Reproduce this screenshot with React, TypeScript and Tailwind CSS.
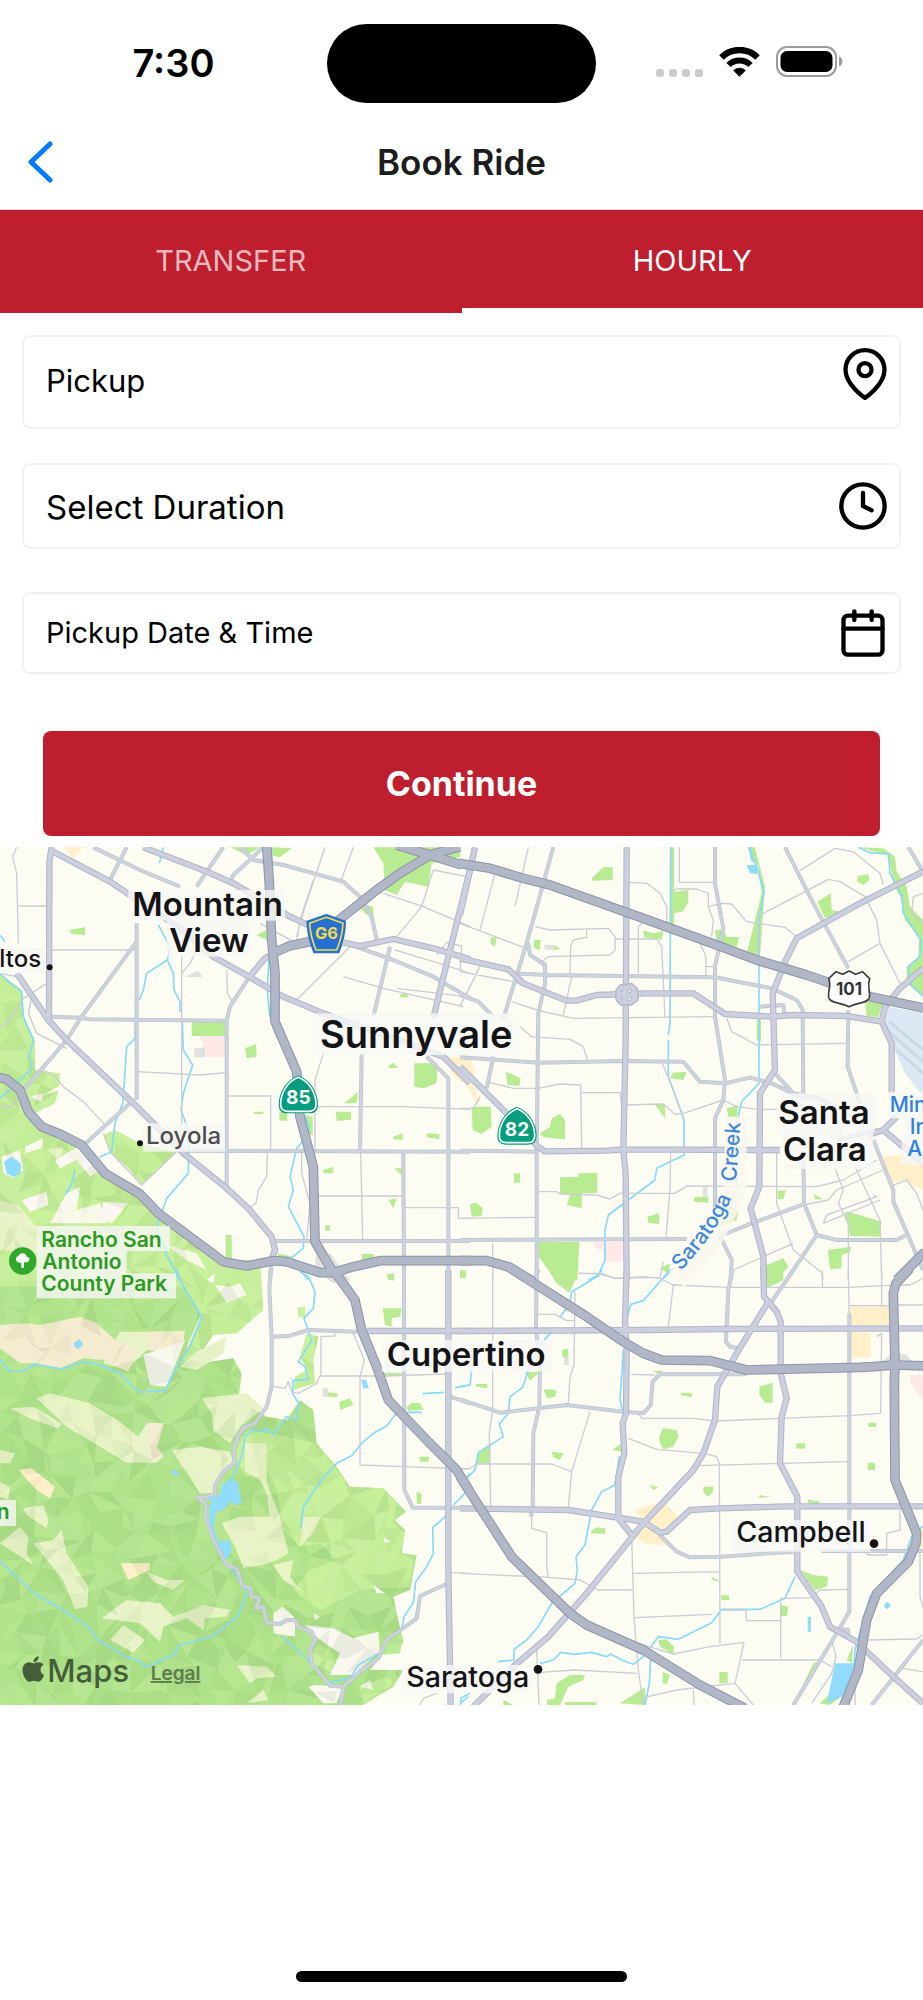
import { useState } from 'react';
import { FiCalendar, FiClock, FiMapPin } from 'react-icons/fi';
import { FaApple } from 'react-icons/fa';

type Tile = {
  x: number;
  y: number;
  hills?: string;
  meadow?: string;
  tan?: string;
  sand?: string;
  clearing?: string;
  parks: string;
  commerce?: string;
  hospital?: string;
  airport?: string;
  lakes?: string;
  creeks: string;
  minor: string;
  secondary: string;
  major: string;
  freeway: string;
};

// Each tile holds its own local coordinates, three map units per pixel.
const tiles: Tile[] = [
  {
    x: 0,
    y: 0,
    meadow:
      'M0 400 65 450 70 530 105 600 105 690 180 700 178 738 130 765 175 752 165 790 100 822 130 870 245 925 310 1010 420 1070 500 1140 590 1210 660 1270 740 1290 760 1340 0 1340ZM310 885 345 870 430 915 530 935 425 1035 385 985 330 940Z',
    hills:
      'M0 590 50 575 100 620 90 690 50 720 0 700ZM0 890 60 900 70 950 0 960ZM70 900 160 860 230 920 150 990 90 1060 0 1080 0 1030ZM0 1240 110 1230 300 1240 480 1240 540 1340 0 1340ZM790 0Z',
    tan: 'M0 1080 60 1100 110 1160 130 1240 0 1230ZM140 930 190 920 180 960Z',
    clearing:
      'M75 920 130 895 125 925 75 940ZM5 950 60 930 70 990 40 1015 10 1000ZM165 960 245 915 300 990 270 1010 230 960 180 985ZM65 1080 140 1055 145 1095 90 1115ZM150 1150 200 1060 240 1040 230 1110 300 1090 320 1150 190 1150ZM310 1085 385 1090 335 1150 300 1140ZM90 770 130 760 125 785ZM500 1215 590 1240 620 1290 560 1260Z',
    parks:
      'M575 545 675 545 675 588 575 588ZM735 625 768 612 770 650 740 655ZM208 270 255 262 255 285 215 282ZM690 22 780 22 740 45ZM815 22 875 25 840 52 815 45ZM1120 22 1380 22 1380 50 1295 70 1285 140 1215 125 1190 165 1155 150 1150 70ZM1080 190 1120 200 1120 240 1085 210ZM770 285 800 270 800 300ZM1200 465 1215 457 1228 472 1200 472ZM1165 678 1180 668 1195 684 1165 684ZM1243 670 1312 670 1310 730 1270 745 1243 740ZM1033 790 1075 755 1070 790ZM1007 815 1053 815 1053 840 1010 842ZM838 815 862 815 862 842 838 842ZM912 825 938 830 938 885 922 885ZM800 440 820 550 890 690 860 640 810 540ZM762 815 790 815 790 822 762 822ZM1180 890 1208 880 1208 900 1180 898ZM1280 880 1318 882 1318 898 1280 892ZM970 990 1000 980 1000 1000 970 1000ZM1183 985 1205 985 1205 1005ZM1165 1080 1190 1075 1180 1105ZM975 1158 990 1155 990 1172 975 1172ZM677 1185 695 1185 695 1260 677 1250ZM1085 1242 1122 1242 1122 1262 1085 1262ZM830 1240 880 1250 840 1255ZM1160 1302 1182 1302 1182 1320ZM1382 1292 1398 1292 1398 1315 1382 1312Z',
    commerce: 'M190 22 250 22 220 55ZM1335 650 1410 650 1410 740 1360 710ZM1070 765 1078 765 1078 785Z',
    hospital: 'M600 588 675 588 675 652 620 650Z',
    lakes: 'M12 965 35 950 62 970 62 1000 40 1012 20 1000Z',
    creeks:
      'M0 400 25 425 65 455 70 530 100 600 88 650 95 685 50 730 0 775M0 285 15 305M490 22 478 70M475 255 510 320 502 360 440 400 430 450 418 480M502 360 520 400 522 450 540 485 540 515M407 495 405 595 380 620 372 740 368 790 345 850 335 935 298 952M547 545 550 630 578 675 550 760 543 810 565 870 565 1000 500 1075 470 1160 500 1245 540 1320M808 340 802 450 808 520 830 590 900 690M912 825 928 860 925 885 890 925 870 1010 880 1050 865 1100 912 1190 910 1225 872 1255 925 1320M225 990 215 1030 198 1062M812 22 818 90',
    minor:
      'M50 22 38 50 50 100 55 310M52 198 145 198M155 330 410 330M545 350 545 850M410 695 600 705 680 698M680 768 812 768 812 935M945 800 1210 800 1410 808M970 640 945 720 945 930M975 22 915 200 890 290M1060 22 1020 130M1050 320 890 480M1150 160 1270 200 1410 260M1300 90 1400 110M1300 90 1265 200 1190 290M1030 410 1150 445 1390 500M1190 445 1400 470M945 1068 1205 1068M1082 935 1088 1200M1210 1103 1375 1103 1375 1135 1410 1135M802 940 800 1010 775 1050 768 1090 745 1105M905 940 905 1000 930 1090 920 1200M95 470 85 520 110 580 200 625M130 690 160 705 190 740 250 785 320 860M0 558 20 550 70 475 140 430M0 400 50 410M545 400 570 370 590 330M680 390 682 460 700 490M310 880 330 935 425 1035 530 935M1185 330 1250 350 1320 370 1410 400M1310 345 1340 308 1385 318 1380 390M780 250 890 310 900 240 940 120M0 800 30 800 75 755',
    secondary:
      'M410 250 410 780M155 530 240 533 270 538 680 542M255 912 390 790M280 22 420 90 540 140M380 22 330 120M670 22 630 80 590 140M690 130 700 105 790 22M720 22 760 60 850 75 1030 125 1080 170 1115 230 1130 300M1040 310 1180 360 1300 410 1410 475M1170 320 1120 530M1085 640 1080 930M565 932 1410 935M1280 650 1345 715 1345 1320M1210 935 1212 1320M825 1203 1410 1203M815 1265 810 1320M75 745 200 600 245 530 410 305M745 415 690 500 680 540 680 1045',
    major:
      'M150 30 330 125 540 265 640 350 750 412 850 470 970 520 1250 620 1330 650 1410 730M50 400 145 540 200 600 400 790 550 940 680 1045 745 1105 815 1190 825 1230 812 1265M430 22 620 95 700 130 870 230 940 262M1030 308 1080 318 1180 297 1300 325 1410 358M147 545 148 65 155 22M1410 90 1340 370 1300 535M745 415 795 355 830 338',
    freeway:
      'M-15 710 20 718 60 750 85 815 125 860 180 882 245 915 315 1000 420 1062 475 1120 670 1265 740 1278 820 1262 860 1265 960 1298 1000 1298 1060 1280 1140 1262 1415 1262M800 15 808 130 815 300 825 400 825 545 890 695 900 830 940 980 945 1205 1000 1298M830 335 870 317 940 303M1010 245 1130 150 1200 100 1290 45 1380 20M1190 15 1290 45 1385 75',
  },
  {
    x: 1380,
    y: 0,
    parks:
      'M395 115 430 82 458 82 458 120 398 122ZM630 22 642 22 642 260 630 260ZM640 155 685 150 685 185 668 215 640 220ZM864 22 885 22 915 140 900 350 860 340 880 260 905 160 895 80ZM765 270 790 268 800 290 838 292 830 320 770 305ZM550 272 585 280 610 272 605 300 552 292ZM1195 22 1270 25 1305 50 1310 95 1340 140 1350 200 1389 240 1389 470 1340 430 1340 380 1375 350 1378 290 1335 240 1325 180 1300 130 1285 45ZM1072 185 1112 160 1115 210 1140 215 1095 235ZM1192 108 1225 102 1228 120 1210 135 1192 125ZM92 292 110 292 105 320 92 312ZM222 300 242 300 240 330 222 325ZM282 315 300 325 285 332ZM138 695 182 715 178 738 142 735ZM35 800 92 800 95 860 65 882 38 870ZM240 880 270 860 275 835 300 822 315 840 315 898 250 892ZM630 715 640 698 680 695 670 720ZM586 795 615 795 615 835ZM800 805 835 795 830 838 805 830ZM162 1000 180 1000 180 1028 162 1028ZM300 1012 355 1010 355 1000 412 998 412 1058 365 1060 365 1105 320 1095 330 1065 300 1060ZM30 1092 50 1088 68 1105 65 1128 35 1130ZM562 1130 597 1120 597 1152 565 1148ZM702 1072 745 1070 745 1088 702 1085ZM953 1052 978 1050 970 1078 953 1078ZM1060 1062 1090 1078 1065 1078ZM235 1206 358 1206 352 1320 290 1320 235 1250ZM1155 1115 1180 1120 1265 1145 1260 1190 1170 1188ZM1104 1230 1172 1220 1172 1235 1145 1245 1145 1285 1110 1288ZM920 1275 970 1255 985 1280 950 1320 920 1320ZM1215 482 1268 492 1255 532 1220 528ZM775 1090 835 1110 830 1140 780 1160ZM600 1285 630 1270 625 1300ZM0 1292 18 1310 0 1315ZM890 540 903 540 903 605 890 600Z',
    commerce: 'M0 648 35 660 45 700 35 730 60 780 55 800 0 700ZM970 975 1025 975 1025 985 975 985ZM1260 950 1330 945 1389 960 1389 1050 1330 1020 1290 1030Z',
    hospital: 'M402 1206 490 1206 490 1265 440 1265 430 1230 405 1225Z',
    airport: 'M1285 500 1389 520 1389 770 1335 700 1300 620 1270 560Z',
    lakes: 'M860 75 890 75 892 102 870 100ZM866 22 874 22 880 70 872 60Z',
    creeks:
      'M632 22 630 550 625 585M625 600 625 710 672 840 672 945 590 985 585 1020 445 1125 435 1170 435 1260 415 1305 385 1320M866 22 890 80 912 155 897 240 897 730 845 785 830 850 830 1040 805 1120M1195 22 1230 38 1285 42 1290 100 1325 165 1330 220 1382 300 1380 350 1345 380 1350 430 1389 470M605 1320 640 1285',
    minor:
      'M205 22 165 200M280 22 240 150M225 260 270 270 445 265 465 290 465 330 450 345 265 350 240 370M380 270 380 292 340 300 332 320 330 405M465 297 590 297 605 320 615 530M535 400 535 260 550 245M505 127 560 130 600 160 620 200 620 260M658 22 658 127 765 127M637 155 650 147 710 147 745 160 745 200 785 190 815 192 860 245 975 262 1010 290M745 200 760 240 755 290M690 290 720 310 738 350 738 405M738 380 765 380M1020 92 1125 25 1180 35 1260 100 1270 135M890 230 1105 118 1140 125 1215 170 1250 240 1260 310 1165 365M1260 310 1320 430M1389 160 1360 170 1355 220 1389 250M0 250 190 322M105 100 60 270M0 395 160 425 250 460M155 485 230 510 340 535 760 530M310 525 335 410M0 500 60 380M180 560 215 590 330 598 370 620 382 660M90 728 160 745 235 745 300 732 362 735 365 925M365 758 480 758 485 795 610 792 645 822 670 820 790 780 830 800 890 808 1030 808M0 805 40 805 60 770M800 535 815 575 890 615 1160 610M605 665 640 750 670 830M235 1055 290 1055 300 1062 410 1065 450 1077 480 1060 645 1060 680 1038 1070 1040 1150 1020 1250 960M632 940 630 1050 618 1190M0 1135 235 1132M98 1210 98 1320M950 935 950 1090 1000 1230 1088 1300 1088 1320M1030 1095 1105 1080 1130 1050 1270 990M1125 985 1150 1050 1135 1090 1165 1150 1165 1320M1185 980 1260 1140 1265 1320M1090 1150 1100 1125 1250 1070 1240 1065M1090 1150 1260 1080M820 1290 1000 1210M1130 840 1150 900M1389 1110 1370 1060 1340 1020 1290 1040M355 1300 430 1302 465 1315 600 1312 610 1265M895 240 895 350',
    secondary:
      'M765 22 765 130 790 265 765 380 765 530 795 720 790 780 765 835 765 1100M280 22 200 310 130 535M205 310 210 345 255 375 255 430 235 520 230 935 230 1320M150 400 260 405 765 412 935 445 1010 480 1028 510 1030 780M975 22 1060 190 1165 385M1165 510 1163 680 1200 790M0 652 235 668 490 663 670 665 720 725 795 730 870 713 935 730 1020 770M0 932 235 935M0 465 55 485 100 530M100 650 80 745M0 1200 490 1198 680 1197M1030 960 1032 1090 1070 1185 1130 1200 1310 1200 1340 1185M780 1188 875 1150 1030 1093M780 1188 815 1260 812 1320M1070 1185 980 1320M1240 900 1300 1050 1300 1085 1389 1290M900 500 970 495 975 530M945 700 1000 760 1075 775 1130 800M1130 900 1250 870M1345 22 1389 95',
    major:
      'M0 680 150 830 235 922 255 934 440 932 490 928 890 930 960 930M45 22 0 225M0 355 145 388 190 430 320 482 350 482 410 465 560 460 700 460 795 522 935 530 1000 525 1160 528 1265 545 1275 500 1320 445 1389 385M500 22 497 600 490 930 497 1000 500 1320M1389 95 1200 190 1010 295 975 365 938 460 945 690 900 760 898 1040 872 1105 910 1250 912 1320M1265 545 1295 610 1295 760M1225 885 1270 870 1310 830M1270 870 1389 970',
    freeway:
      'M-5 70 90 85 190 115 270 135 480 210 550 235 770 315 890 360 1040 405 1230 470 1395 505M0 1262 80 1262 150 1282 220 1325M1395 1235 1310 1320',
  },
  {
    x: 0,
    y: 1290,
    hills:
      'M0 -30 540 -30 605 130 560 230 600 280 700 265 725 310 715 390 800 440 860 450 900 390 940 420 950 520 1010 590 1050 652 1150 655 1218 725 1185 750 1215 780 1205 850 1250 855 1230 960 1180 980 1197 1060 1210 1120 1150 1150 1110 1200 1210 1200 1180 1250 1080 1310 0 1310Z',
    meadow:
      'M535 -30 780 -30 790 120 710 190 640 195 590 270 545 270 605 140 560 60ZM740 480 860 500 950 520 1050 650 1150 655 1190 700 1180 760 1215 790 1200 850 1240 870 1230 950 1080 960 960 1020 880 960 930 900 1010 870 960 820 900 830 850 780 830 660 800 600 740 620 700 560ZM950 1120 1000 1150 1000 1210 930 1180ZM1080 1250 1160 1220 1180 1240 1090 1300ZM400 290 500 330 470 350ZM920 190 955 200 940 270 945 340 880 360 885 320 920 300 900 260ZM893 112 915 112 915 145 895 140Z',
    tan: 'M110 385 150 370 270 400 360 455 415 500 440 460 490 460 470 530 490 560 465 578 380 578 300 530 200 470ZM30 415 100 410 185 460 175 475 100 450ZM605 385 740 370 790 415 720 470 690 520 640 480 635 430ZM515 540 600 530 690 545 700 580 650 630 640 670 600 670ZM735 520 800 520 800 640 840 740 865 850 830 870 790 885 730 893 705 830 665 760 720 740 810 740 800 670 780 630 735 605ZM360 185 550 185 550 215 440 240 380 300 310 280ZM540 290 590 245 680 200 670 250 590 300ZM100 820 160 810 185 780 200 850 265 950 262 1010 225 1018 190 930ZM305 1045 380 990 480 1000 520 1040 610 1005 690 1020 680 1040 615 1045 610 1080 560 1045 490 1070 480 1115 420 1060ZM330 1110 370 1065 435 1110 400 1148ZM710 1185 800 1190 830 1220 770 1225 750 1240ZM820 885 880 870 870 920 905 965 850 930ZM910 740 960 740 940 790 900 830ZM440 905 500 930 555 930 520 960 460 935ZM0 635 30 650 25 690 0 680ZM70 715 130 705 145 750 140 775 80 735ZM0 820 60 770 85 800 80 850 100 885 30 840ZM0 540 45 550 30 580 0 580ZM740 1300 790 1260 805 1290Z',
    sand: 'M0 165 80 160 120 165 240 140 290 160 345 210 410 240 385 305 310 270 250 265 180 295 100 280 60 280 0 235ZM445 460 492 460 470 530 490 555 470 578 445 570ZM445 185 555 182 550 215 490 250 445 240Z',
    clearing:
      'M430 255 555 212 500 350 450 345 440 300ZM820 1030 848 1010 885 1045 885 1100 820 1090ZM915 1065 1000 1075 1060 1105 1135 1085 1140 1145 1060 1215 990 1215 1020 1150 960 1110ZM645 45 690 50 720 40 740 75 680 98ZM620 30 645 10 640 40ZM945 1245 1030 1250 1010 1300 970 1300 925 1250ZM1120 945 1155 970 1130 970ZM1150 800 1172 815 1155 820ZM940 1030 960 1040 945 1050ZM1080 1250 1110 1230 1120 1260Z',
    parks:
      'M1148 115 1205 115 1200 140 1175 145 1175 172 1155 165ZM980 365 1015 372 1010 382 985 380ZM1018 395 1050 385 1060 405 1020 420ZM1220 412 1235 398 1262 400 1270 420 1225 422ZM1258 560 1288 560 1285 575 1260 575ZM1250 665 1265 672 1263 703 1250 700ZM1160 15 1182 10 1182 32 1165 30ZM1380 0 1398 5 1398 25 1382 22ZM1150 308 1205 308 1205 316 1150 316ZM1170 1110 1210 1095 1200 1150 1140 1155Z',
    commerce: 'M55 600 95 595 165 650 150 685 110 660ZM362 880 450 880 450 900 385 930Z',
    lakes:
      'M665 645 690 628 712 635 725 700 705 705 690 695 670 720 648 725 640 770 655 815 690 810 695 840 680 870 650 830 628 780 628 710 640 692 590 685 660 675ZM510 600 530 602 540 618 520 615ZM222 218 238 208 250 222 235 238 222 230ZM1083 328 1098 330 1107 355 1090 355Z',
    creeks:
      'M530 0 545 40 605 140 570 230 530 290 495 362 415 366 360 310 300 285 250 275 185 297 105 282 70 303 28 303 0 268M900 5 925 20 945 65 940 115 912 145 935 212 895 275 915 290 925 328 878 332 878 370 897 402 888 450 860 440 820 495 800 475 790 485 760 478 735 500 725 560 690 640M1265 427 1225 427 1185 435 1160 468 1120 490 1085 520 1055 557 1010 580 960 635 910 710 902 775M1268 371 1332 367M1365 353 1410 345M0 875 60 930 105 972 190 1020 270 1075 290 1108 330 1130 370 1158 415 1172 438 1192 520 1155 540 1125 640 1098 712 1040 742 970 710 920 680 880M845 1098 925 1170 985 1237 1050 1225 1075 1185 1140 1148M1338 738 1298 773 1300 850 1280 890 1247 935 1240 998 1212 1040 1205 1080M1410 610 1395 630M1410 655 1360 705M1382 1305 1382 1285 1410 1270',
    minor:
      'M960 318 1150 318 1340 312M963 318 963 200 1005 198 1005 185M1060 190 1093 270 1080 320 1080 585 1215 590 1410 597M815 348 855 355 865 335 875 365 895 370 950 340 960 318M1350 908 1410 910M1260 1305 1270 1285 1310 1270',
    secondary:
      'M812 0 808 60 815 200 815 350 800 410 765 460 735 470 715 495 700 545 705 578 670 605 645 645 645 672 620 680 592 682 620 705 615 735 640 810 680 885 712 897 725 945 750 955 755 980 778 985 768 1015 790 1010 800 1058 840 1062 860 1050 885 1050 895 1070 935 1085 945 1110 930 1140 935 1180 990 1247 1030 1250 1080 1205 1135 1165 1160 1110 1250 1045 1260 978 1340 942M1030 1250 1022 1310M820 200 870 197 925 180 1070 185M1212 0 1213 660 1238 713 1410 713M1350 380 1410 400',
    major: 'M1345 0 1345 900 1352 1310M1100 183 1410 183',
    freeway: 'M1000 0 1065 90 1085 180 1130 290 1165 390 1280 510 1370 600 1410 665',
  },
  {
    x: 1380,
    y: 1290,
    parks:
      'M265 0 352 0 345 30 328 68 290 40ZM920 0 970 0 970 30 920 55ZM305 240 325 236 325 260 308 262ZM195 305 240 305 210 332ZM45 342 82 342 82 355 50 350ZM250 358 290 360 285 380 262 385ZM578 302 608 302 595 312ZM660 368 697 370 695 382 665 376ZM898 350 938 338 938 398 915 398 898 375ZM598 500 608 475 650 480 655 500 640 530 610 538 598 515ZM458 540 485 520 485 545ZM52 548 92 520 90 580 50 580ZM275 545 310 550 300 570 280 562ZM1225 458 1248 458 1248 472 1225 470ZM1008 520 1035 520 1035 536 1010 536ZM1223 578 1245 578 1245 600 1223 600ZM730 650 760 650 758 668 742 680 730 665ZM568 645 595 652 580 660ZM898 675 932 680 898 684ZM1043 688 1080 695 1075 705 1045 698ZM392 785 410 772 435 775 435 792 395 790ZM752 920 785 935 760 932ZM784 976 807 976 807 990 784 990ZM1020 900 1060 915 1105 920 1100 950 1065 960ZM962 1005 985 1010 980 1038 962 1038ZM595 1110 620 1108 642 1130 640 1152 600 1130ZM608 1205 630 1215 620 1242 608 1240ZM778 1206 803 1206 803 1240 778 1240ZM260 1290 285 1285 290 1240 330 1215 375 1215 370 1230 325 1250 300 1305 262 1305ZM480 1300 555 1252 555 1305ZM315 1296 410 1296 410 1305 315 1305ZM130 1290 160 1305 130 1305ZM1160 1170 1180 1125 1175 1180ZM1080 1300 1120 1260 1150 1275 1110 1305ZM1070 1175 1010 1300 1000 1305 1060 1180Z',
    commerce: 'M522 720 610 695 660 745 600 790 620 825 560 822 525 800 550 755ZM1170 110 1290 108 1290 165 1170 165ZM1172 185 1232 190 1232 262 1172 262ZM1378 770 1389 770 1389 835 1378 835Z',
    hospital: 'M1350 315 1389 315 1389 390 1350 340Z',
    lakes: 'M1125 1180 1180 1180 1175 1240 1145 1280 1100 1300ZM1043 1040 1053 1040 1053 1085 1043 1085ZM1275 1000 1285 996 1292 1008 1282 1018 1272 1010Z',
    creeks:
      'M425 0 415 18 335 65 330 100 300 142M270 190 240 225 205 300 188 352 150 380 145 430 118 462 130 500 55 548 45 600 0 645M35 300 30 345 0 350M630 0 550 92 512 103 500 150M490 240 487 290 480 390 490 430M478 560 465 645 425 665 395 720 375 825 348 860 352 900 345 940 275 1000 235 1070 200 1110 162 1138 162 1170 115 1175M240 1180 280 1170 302 1147 345 1153 395 1147 440 1160 452 1152 490 1172 520 1183 550 1160 595 1100 655 1108 755 1058 785 1018 900 1018 975 985 1005 920M572 1170 568 1240 555 1305M1389 768 1355 800 1330 870 1230 980 1185 1140 1180 1220M0 1300 25 1280',
    minor:
      'M98 0 98 420 88 490 92 712M232 133 285 133 320 152 342 152M345 65 342 285 330 320 325 400M355 10 410 10 465 25 550 20 600 25 640 45 805 52 1168 52 1265 47 1350 45 1389 25M640 45 625 170M235 10 240 0M512 313 585 315M390 425 335 605 325 715M535 430 545 445 700 445 765 453 965 445 1165 437 1262 430 1265 190 1250 200M505 505 590 538 730 550 770 560 778 580 780 1120M712 587 1165 575M0 597 30 595 50 582 275 582 335 605M215 735 215 775 260 788 260 890 265 920M0 910 265 922 360 930 415 960 515 960M520 910 778 905M525 1043 755 1033M515 800 522 1043 535 1200 550 1305M535 1120 640 1152 750 1130 852 1117 825 1240 650 1260 550 1283M825 1240 880 1305M845 1170 1080 1170 1115 1190M962 1165 962 985 1055 983 1080 960 1165 958M962 1052 860 1052 858 1020 785 1020M700 1260 702 1305M240 1207 345 1200 530 1210M230 1140 237 1305M1165 0 1168 170M1265 0 1265 110M1170 107 1290 107M1310 105 1389 105M1320 715 1320 780 1280 790 1280 855 1225 855 1215 845M1380 850 1380 980 1389 1010M1085 0 1088 50M1115 1110 1128 1160 1115 1210 1055 1300M1225 1110 1370 1107 1389 1095M1325 1195 1389 1205M1185 1210 1185 1305',
    secondary:
      'M230 0 228 180 240 280 238 410 220 490 218 720M0 388 120 428 320 405 490 425 550 430 572 405 578 335 600 313 860 313M818 0 805 60 798 215 810 230 835 235M1000 0 925 110M1168 130 1168 1025 1130 1090 1000 1305M600 795 650 845 690 862 780 860 1000 845M1085 843 1389 843M1389 1110 1235 1305M212 720 215 740M1110 1075 1165 1080 1165 1100',
    major:
      'M500 0 495 150 500 240 498 430 488 460 493 550 475 620 475 745 515 795M0 183 555 180 800 177 1389 175M925 95 830 250 772 350 765 450 730 550 700 600 550 760 380 970 265 1100 160 1190 40 1310M0 715 325 720 550 755 600 788 620 785 690 720 780 715 980 709 1389 709M910 -10 912 80 950 125 962 155 962 310 980 385 965 440 960 580 1012 680 1012 905 1085 1010 1110 1070 1190 1115 1300 1220 1389 1300',
    freeway:
      'M140 -12 380 140 490 215 550 250 605 270 750 272 860 300 1200 292 1240 290 1305 285 1395 288M1350 -5 1308 40 1300 70 1305 280 1303 340 1305 630 1370 790 1368 820 1345 875 1250 970 1220 1050 1195 1200 1150 1310M0 620 155 860 330 1030 380 1065 550 1140 720 1245 855 1315',
  },
];

const fills: { key: keyof Tile; color: string }[] = [
  { key: 'hills', color: '#b1e38c' },
  { key: 'meadow', color: '#c4ee98' },
  { key: 'tan', color: '#e7f3c6' },
  { key: 'sand', color: '#f4ebd0' },
  { key: 'clearing', color: '#faf8f0' },
  { key: 'parks', color: '#b8eb92' },
  { key: 'commerce', color: '#fff0c9' },
  { key: 'hospital', color: '#ffe8e8' },
  { key: 'airport', color: '#dce9f4' },
];

const lines: { key: keyof Tile; color: string; width: number }[] = [
  { key: 'creeks', color: '#86dafa', width: 5 },
  { key: 'minor', color: '#cbccd5', width: 4 },
  { key: 'secondary', color: '#bbc3cf', width: 12 },
  { key: 'secondary', color: '#cdd3dc', width: 8 },
  { key: 'major', color: '#b0b5c8', width: 19 },
  { key: 'major', color: '#cccfdd', width: 13 },
  { key: 'freeway', color: '#8c93a8', width: 29 },
  { key: 'freeway', color: '#b1b7c7', width: 23 },
];

const halos = [
  [385, 150, 470, 92],
  [500, 235, 250, 115],
  [945, 520, 610, 125],
  [2330, 760, 295, 115],
  [2350, 872, 270, 115],
  [1145, 1500, 510, 95],
  [2200, 2040, 410, 95],
  [1205, 2475, 390, 85],
  [430, 850, 245, 85],
  [110, 1158, 400, 75],
  [110, 1232, 270, 70],
  [110, 1300, 418, 75],
  [0, 325, 135, 75],
  [0, 1980, 48, 78],
  [2665, 755, 110, 80],
  [2715, 835, 60, 70],
  [2705, 905, 70, 70],
];

// Shaded facets over the hills: a jittered grid split into triangles.
const CELL = 58;

const noise = (a: number, b: number) => {
  const n = Math.sin(a * 127 + b * 311) * 43758;
  return n - Math.floor(n);
};

const vertex = (col: number, row: number) => {
  const x = (col + noise(col, row) * 0.9 - 0.45) * CELL;
  const y = 400 + (row + noise(row + 50, col) * 0.9 - 0.45) * CELL;
  return `${Math.round(x)} ${Math.round(y)}`;
};

const facets = Array.from({ length: 23 * 39 }, (_, i) => {
  const col = i % 23;
  const row = Math.floor(i / 23);
  const a = vertex(col, row);
  const b = vertex(col + 1, row);
  const c = vertex(col + 1, row + 1);
  const d = vertex(col, row + 1);
  return noise(col + 9, row + 4) > 0.5
    ? [`M${a} ${b} ${c}Z`, `M${a} ${c} ${d}Z`]
    : [`M${a} ${b} ${d}Z`, `M${b} ${c} ${d}Z`];
}).flat();

const shades = [
  { fill: '#3f6a22', opacity: 0.08 },
  { fill: '#3f6a22', opacity: 0.04 },
  { fill: '#ffffff', opacity: 0 },
  { fill: '#ffffff', opacity: 0.06 },
  { fill: '#f2ffb0', opacity: 0.12 },
];

const Relief = () => (
  <g clipPath="url(#hill-area)">
    {shades.map((shade, index) => (
      <path
        key={index}
        d={facets.filter((_, i) => Math.floor(noise(i, 7) * shades.length) === index).join('')}
        fill={shade.fill}
        opacity={shade.opacity}
      />
    ))}
  </g>
);

const CityMap = () => (
  <svg
    viewBox="0 21 2769 2574"
    preserveAspectRatio="xMidYMid slice"
    className="block h-[858px] w-full bg-[#fdfcf3]"
    fill="#141416"
    aria-label="Map"
  >
    <defs>
      <clipPath id="hill-area">
        <path d={tiles[0].meadow} />
        <path d={tiles[2].hills} transform="translate(0 1290)" />
        <path d={tiles[2].meadow} transform="translate(0 1290)" />
      </clipPath>
      <path id="creek-line" d="M2038 1298Q2115 1215 2155 1150T2208 1030L2225 800" />
    </defs>

    {fills.map((layer) =>
      tiles.map((tile) => (
        <path
          key={`${layer.key}-${tile.x}-${tile.y}`}
          transform={`translate(${tile.x} ${tile.y})`}
          d={tile[layer.key] as string | undefined}
          fill={layer.color}
        />
      )),
    )}
    <Relief />
    {tiles.map((tile) => (
      <path
        key={`lakes-${tile.x}-${tile.y}`}
        transform={`translate(${tile.x} ${tile.y})`}
        d={tile.lakes}
        fill="#91dbfb"
      />
    ))}

    <g stroke="#c9d9e6" strokeWidth="9">
      <path d="M2668 545 2769 630M2660 570 2769 665M2690 630 2769 700" />
    </g>
    <g fill="#e0e0dc">
      <path d="M583 625 615 622 615 652 583 652ZM555 410 595 392 610 412ZM1632 315 1662 315 1665 330 1635 328ZM2108 1040 2122 1040 2122 1070 2108 1070ZM948 1240 990 1240 1050 1320 1000 1330 945 1290ZM2640 1570 2680 1535 2720 1545 2740 1570ZM1692 1550 1706 1550 1706 1575 1692 1575ZM968 1645 985 1645 985 1670 968 1670Z" />
    </g>

    {lines.map((layer) =>
      tiles.map((tile) => (
        <path
          key={`${layer.key}-${layer.width}-${tile.x}-${tile.y}`}
          transform={`translate(${tile.x} ${tile.y})`}
          d={tile[layer.key] as string}
          fill="none"
          stroke={layer.color}
          strokeWidth={layer.width}
          strokeLinejoin="round"
        />
      )),
    )}

    {/* Expressway interchange */}
    <path
      d="M1860 435 1895 430 1912 445 1915 480 1895 495 1862 495 1848 480 1848 450Z"
      fill="#cccfdd"
      stroke="#b0b5c8"
      strokeWidth="4"
    />
    <path d="M1884 448h9v9h-9zM1884 472h9v9h-9zM1862 450h5v5h-5zM1862 474h5v5h-5z" fill="#fdfcf3" stroke="#b0b5c8" strokeWidth="3" />

    <g fill="#f8f8f6" opacity=".8">
      {halos.map(([x, y, width, height]) => (
        <rect key={`${x}-${y}`} x={x} y={y} width={width} height={height} />
      ))}
    </g>
    <path d="M2030 1320Q2120 1225 2155 1160T2205 1040L2208 830" fill="none" stroke="#faf7ee" strokeWidth="66" opacity=".85" />

    <g className="font-semibold">
      <text x="397" y="228" fontSize="99">Mountain</text>
      <text x="508" y="337" fontSize="99">View</text>
      <text x="960" y="625" fontSize="114">Sunnyvale</text>
      <text x="2335" y="853" fontSize="99">Santa</text>
      <text x="2349" y="962" fontSize="99">Clara</text>
      <text x="1160" y="1579" fontSize="99">Cupertino</text>
    </g>
    <g className="font-medium">
      <text x="2209" y="2107" fontSize="86">Campbell</text>
      <text x="1219" y="2541" fontSize="86">Saratoga</text>
      <text x="-2" y="382" fontSize="72">ltos</text>
      <text x="438" y="911" fontSize="72" fill="#4c4c4e">Loyola</text>
    </g>
    <g>
      <circle cx="149" cy="382" r="9" />
      <circle cx="420" cy="910" r="9" />
      <circle cx="2622" cy="2111" r="13" />
      <circle cx="1614" cy="2488" r="13" />
    </g>
    <g className="font-semibold" fontSize="63" fill="#2b9a1e">
      <text x="124" y="1221">Rancho San</text>
      <text x="127" y="1287">Antonio</text>
      <text x="124" y="1354">County Park</text>
      <text x="-10" y="2036">n</text>
    </g>
    <g className="font-medium" fontSize="63" fill="#2f80e6">
      <text x="2669" y="816">Min</text>
      <text x="2729" y="883">In</text>
      <text x="2722" y="949">A</text>
    </g>
    <g className="font-medium" fontSize="63" fill="#3f88d8">
      <text>
        <textPath href="#creek-line" startOffset="6">Saratoga</textPath>
      </text>
      <text>
        <textPath href="#creek-line" startOffset="325">Creek</textPath>
      </text>
    </g>

    <circle cx="68" cy="1263" r="41" fill="#30a82c" />
    <path d="M64 1283v-15c-18 4-21-18-9-19 4-13 24-11 25 1 13 1 11 20-8 17v16Z" fill="#fff" />

    {/* Route shields */}
    <g textAnchor="middle" className="font-bold">
      <path d="M979 224 1036 244Q1036 290 1016 338H942Q922 290 921 244Z" fill="#2471d3" stroke="#2471d3" strokeWidth="4" strokeLinejoin="round" />
      <path d="M979 232 1029 250Q1027 290 1010 330H948Q931 290 929 250Z" fill="none" stroke="#f8db45" strokeWidth="5" strokeLinejoin="round" />
      <text x="979" y="298" fontSize="49" fill="#f8db45">G6</text>
      {[
        { x: 895, y: 764, label: '85' },
        { x: 1551, y: 858, label: '82' },
      ].map((shield) => (
        <g key={shield.label} transform={`translate(${shield.x} ${shield.y})`}>
          <path d="M0-58C35-45 59-8 59 30Q59 56 34 56H-34Q-59 56-59 30C-59-8-35-45 0-58Z" fill="#049d7d" />
          <path d="M0-52C31-40 53-7 53 29Q53 50 32 50H-32Q-53 50-53 29C-53-7-31-40 0-52Z" fill="none" stroke="#fff" strokeWidth="5" />
          <text y="29" fontSize="57" fill="#fff">{shield.label}</text>
        </g>
      ))}
      <path d="M2508 395 2528 403 2547 393 2567 403 2587 395 2609 416C2600 440 2612 450 2608 473C2604 490 2574 486 2547 500C2520 486 2490 490 2486 473C2482 450 2496 440 2486 416Z" fill="#fff" stroke="#3e3e42" strokeWidth="5" strokeLinejoin="round" />
      <text x="2547" y="464" fontSize="51" fill="#333336">101</text>
    </g>

    <FaApple size={88} x="56" y="2443" color="#455d38" fill="#455d38" />
    <text x="142" y="2526" fontSize="93" fill="#455d38" className="font-medium">Maps</text>
    <a href="#legal">
      <text x="452" y="2520" fontSize="57" fill="#5e7c4e" className="font-semibold underline">Legal</text>
    </a>
  </svg>
);

const StatusBar = () => (
  <div className="grid grid-cols-[1fr_269px_1fr] pt-6">
    <div className="flex items-center justify-center pl-5 text-[38px] font-semibold">7:30</div>
    <div className="h-[79px] rounded-full bg-black" />
    <div className="flex items-center justify-center gap-4 pr-5 pb-1">
      <svg className="h-[30px] w-[47px]" viewBox="0 0 47 30" fill="#cbcbcb">
        <rect x="0" y="22" width="8" height="8" rx="3" />
        <rect x="13" y="22" width="8" height="8" rx="3" />
        <rect x="26" y="22" width="8" height="8" rx="3" />
        <rect x="39" y="22" width="8" height="8" rx="3" />
      </svg>
      <svg className="h-[30px] w-[41px]" viewBox="0 0 41 30" fill="none" stroke="#000">
        <path d="M2.5 10.5A25.5 25.5 0 0 1 38.5 10.5" strokeWidth="6.5" />
        <path d="M9.5 18A15.5 15.5 0 0 1 31.5 18" strokeWidth="6" />
        <path d="M20.5 29.5 14.5 23.5A8.5 8.5 0 0 1 26.5 23.5Z" fill="#000" strokeWidth=".5" />
      </svg>
      <svg className="h-[31px] w-[67px]" viewBox="0 0 67 31">
        <rect x="1" y="1" width="59" height="29" rx="10" fill="none" stroke="#9b9b9b" strokeWidth="2" />
        <rect x="4.5" y="5" width="52" height="21" rx="6.5" />
        <path d="M63 10.5C67.5 12 67.5 19 63 20.5Z" fill="#9b9b9b" />
      </svg>
    </div>
  </div>
);

const tabs = ['TRANSFER', 'HOURLY'];

const App = () => {
  const [activeTab, setActiveTab] = useState('HOURLY');

  return (
    <div className="flex min-h-screen flex-col bg-white font-['Inter','Liberation_Sans',sans-serif] text-black">
      <StatusBar />

      <header className="mt-3 grid h-[95px] grid-cols-[1fr_auto_1fr] items-center border-b border-[#d8d8d8] px-7">
        <button type="button" aria-label="Back" className="w-[26px]">
          <svg className="h-[42px] w-[26px]" viewBox="0 0 26 42" fill="none" stroke="#007aff" strokeWidth="5" strokeLinecap="round" strokeLinejoin="round">
            <path d="M22 3 3 21 22 39" />
          </svg>
        </button>
        <h1 className="text-[35px] font-semibold text-[#1c1c1e]">Book Ride</h1>
      </header>

      <div role="tablist" className="grid h-[103px] grid-cols-2 bg-[#be1e2d]">
        {tabs.map((tab) => (
          <button
            key={tab}
            type="button"
            role="tab"
            aria-selected={activeTab === tab}
            onClick={() => setActiveTab(tab)}
            className={
              activeTab === tab
                ? 'border-b-5 border-white pt-1 text-[29px] text-white'
                : 'border-b-5 border-transparent pt-1 text-[29px] text-white/70'
            }
          >
            {tab}
          </button>
        ))}
      </div>

      <form className="flex flex-col px-[22px] pt-[22px] pb-[11px]" onSubmit={(e) => e.preventDefault()}>
        <label className="flex h-[94px] items-start rounded-lg border-2 border-[#f2f2f2] pt-[11px] pr-2 pl-[22px]">
          <input
            type="text"
            aria-label="Pickup"
            placeholder="Pickup"
            className="h-16 min-w-0 flex-1 text-[31px] outline-none placeholder:text-black"
          />
          <FiMapPin className="h-[52px] w-[52px]" />
        </label>
        <label className="mt-[34px] flex h-[86px] items-center rounded-lg border-2 border-[#f2f2f2] pr-2.5 pl-[22px]">
          <select aria-label="Duration" className="min-w-0 flex-1 appearance-none pt-1 text-[33px] outline-none">
            <option>Select Duration</option>
          </select>
          <FiClock className="h-[52px] w-[52px]" />
        </label>
        <label className="mt-[43px] flex h-[82px] items-center rounded-lg border-2 border-[#f2f2f2] pr-2.5 pl-[22px]">
          <input
            type="text"
            aria-label="Pickup Date & Time"
            placeholder="Pickup Date & Time"
            className="min-w-0 flex-1 text-[29px] outline-none placeholder:text-black"
          />
          <FiCalendar className="h-[52px] w-[52px]" />
        </label>
        <button type="submit" className="mx-[21px] mt-[57px] h-[105px] rounded-lg bg-[#be1e2d] text-[34px] font-bold text-white">
          Continue
        </button>
      </form>

      <CityMap />

      <div className="mt-auto flex justify-center pb-[18px]">
        <div className="h-[11px] w-[331px] rounded-full bg-black" />
      </div>
    </div>
  );
};

export default App;
